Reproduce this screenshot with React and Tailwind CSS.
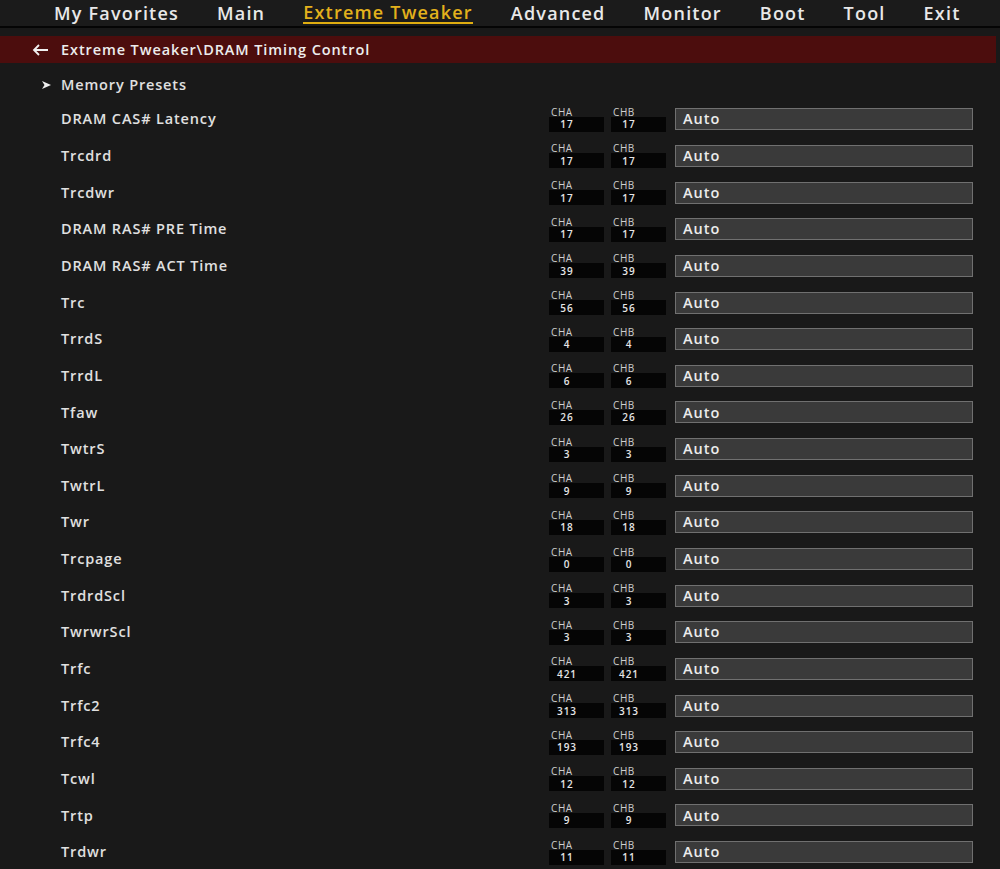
import React from "react";

const NAV = ["My Favorites", "Main", "Extreme Tweaker", "Advanced", "Monitor", "Boot", "Tool", "Exit"];

const ROWS = [
  ["DRAM CAS# Latency", "17"],
  ["Trcdrd", "17"],
  ["Trcdwr", "17"],
  ["DRAM RAS# PRE Time", "17"],
  ["DRAM RAS# ACT Time", "39"],
  ["Trc", "56"],
  ["TrrdS", "4"],
  ["TrrdL", "6"],
  ["Tfaw", "26"],
  ["TwtrS", "3"],
  ["TwtrL", "9"],
  ["Twr", "18"],
  ["Trcpage", "0"],
  ["TrdrdScl", "3"],
  ["TwrwrScl", "3"],
  ["Trfc", "421"],
  ["Trfc2", "313"],
  ["Trfc4", "193"],
  ["Tcwl", "12"],
  ["Trtp", "9"],
  ["Trdwr", "11"],
];

function Channel({ name, value }) {
  return (
    <div className="flex w-[55px] flex-col">
      <div className="h-[10px] pl-[2px] text-[10px] leading-[10px] tracking-[0.6px] text-[#cfcfcf]">{name}</div>
      <div className="flex h-[15px] items-center bg-[#050505]">
        <span className="w-[36px] text-center text-[10px] font-semibold leading-none tracking-[1px] text-[#e6e6e6]">
          {value}
        </span>
      </div>
    </div>
  );
}

function TimingRow({ label, value }) {
  return (
    <div className="flex h-[36.65px] items-center">
      <div className="w-[549px] pl-[61px] text-[14.5px] font-semibold tracking-[0.85px] text-[#e0e0e0]">{label}</div>
      <Channel name="CHA" value={value} />
      <div className="w-[7px]" />
      <Channel name="CHB" value={value} />
      <div className="ml-[9px] flex h-[22px] w-[298px] items-center border border-[#707070] bg-[#3a3a3a] pl-[7px] text-[14.5px] font-semibold tracking-[1px] text-[#ececec]">
        Auto
      </div>
    </div>
  );
}

export default function App() {
  return (
    <div
      className="h-[869px] w-[1000px] overflow-hidden bg-[#191919]"
      style={{ fontFamily: '"Open Sans", "Noto Sans", sans-serif' }}
    >
      {/* top menu */}
      <div className="flex h-[26px] items-center gap-[38px] bg-[#1b1b1b] pl-[54px] text-[18px] font-semibold leading-none tracking-[1.2px] text-[#e8e8e8]">
        {NAV.map((n) =>
          n === "Extreme Tweaker" ? (
            <span key={n} className="border-b-2 border-[#e0ad10] pb-[1px] text-[#e3b11c]">
              {n}
            </span>
          ) : (
            <span key={n}>{n}</span>
          )
        )}
      </div>
      <div className="h-[2px] bg-[#050505]" />

      {/* breadcrumb bar */}
      <div className="mt-[8px] flex h-[27px] w-[996px] items-center bg-[#4c0d0d] text-[14.5px] font-semibold tracking-[0.9px] text-[#ededed]">
        <svg width="17" height="12" viewBox="0 0 17 12" className="ml-[32px] mr-[12px]">
          <path d="M16 6H2M7 1L2 6l5 5" fill="none" stroke="#f0f0f0" strokeWidth="1.8" />
        </svg>
        <span>Extreme Tweaker\DRAM Timing Control</span>
      </div>

      <div className="mt-[5px] flex h-[33px] items-center text-[14.5px] font-semibold tracking-[0.85px] text-[#e0e0e0]">
        <svg width="9" height="8" viewBox="0 0 9 8" className="ml-[42px] mr-[10px]">
          <path d="M0 0L9 4L0 8L2.5 4Z" fill="#f0f0f0" />
        </svg>
        <span>Memory Presets</span>
      </div>

      {ROWS.map(([l, v]) => (
        <TimingRow key={l} label={l} value={v} />
      ))}
    </div>
  );
}
